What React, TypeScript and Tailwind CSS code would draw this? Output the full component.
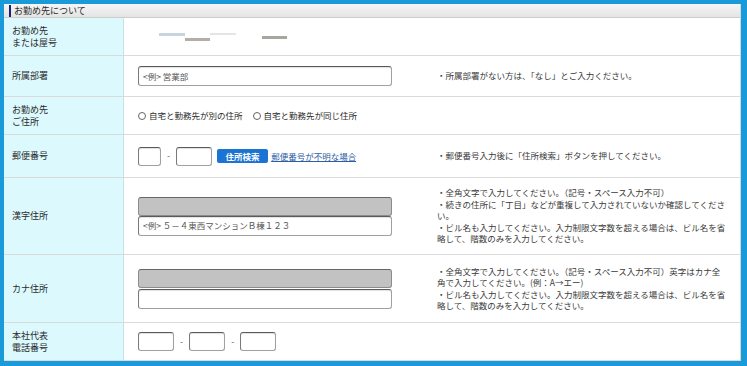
import React from "react";

const font = { fontFamily: '"Noto Sans CJK JP", "Noto Sans", sans-serif' };

function Row({
  label,
  h,
  children,
  note,
}: {
  label: React.ReactNode;
  h: string;
  children?: React.ReactNode;
  note?: React.ReactNode;
}) {
  return (
    <div className={`flex shrink-0 border-b border-[#dadada] ${h}`}>
      <div className="w-[120px] shrink-0 bg-[#dcf9fe] border-r border-[#c6e2e8] flex items-center pl-[8px] text-[9px] leading-[12px] text-[#2a2a2a]">
        <div>{label}</div>
      </div>
      <div className="flex-1 flex items-center pl-[14px]">
        <div className="w-[299px] shrink-0">{children}</div>
        <div className="flex-1 text-[8.5px] leading-[11.5px] text-[#3a3a3a] whitespace-nowrap">{note}</div>
      </div>
    </div>
  );
}

const inputCls =
  "h-[20px] w-[254px] rounded-[3px] border border-[#a0a0a0] border-t-[#5a5a5a] border-l-[#7a7a7a] bg-white shadow-[inset_0_1px_1px_rgba(0,0,0,0.12)] flex items-center pl-[4px] text-[8.5px] text-[#555]";
const grayCls =
  "h-[19px] w-[254px] rounded-[3px] border border-[#8c8c8c] border-t-[#666] bg-[#c2c2c2]";
const smallBox =
  "h-[19px] rounded-[3px] border border-[#a0a0a0] border-t-[#5a5a5a] border-l-[#7a7a7a] bg-white shadow-[inset_0_1px_1px_rgba(0,0,0,0.12)]";

function Radio({ children }: { children: React.ReactNode }) {
  return (
    <span className="inline-flex items-center gap-[3px]">
      <span className="w-[8px] h-[8px] rounded-full border border-[#666] bg-white" />
      <span>{children}</span>
    </span>
  );
}

export default function App() {
  return (
    <div style={font} className="w-[747px] h-[366px] bg-[#1a9ad8] pt-[4px] pl-[4px] pr-[6px] pb-[5px] overflow-hidden">
      <div className="bg-white h-full overflow-hidden flex flex-col border-r border-[#cfd8dc]">
        <div className="h-[14px] shrink-0 bg-gradient-to-b from-[#f6f6f6] to-[#e4e4e4] border-b border-[#cdcdcd] flex items-center pl-[5px]">
          <div className="w-[2px] h-[12px] bg-[#1c1f78]" />
          <div className="ml-[3px] text-[9px] leading-[12px] text-[#2a2a2a]">お勤め先について</div>
        </div>

        <Row label={<>お勤め先<br />または屋号</>} h="h-[38px]">
          <div className="flex items-start h-[8px]">
            <div className="ml-[21px] w-[26px] h-[3px] bg-[#c9d4dd]" />
            <div className="mt-[5px] w-[25px] h-[3px] bg-[#b3aea6]" />
            <div className="w-[26px] h-[2px] bg-[#e3e5e7]" />
            <div className="ml-[26px] mt-[3px] w-[25px] h-[3px] bg-[#a9a59f]" />
          </div>
        </Row>

        <Row label="所属部署" h="h-[41px]" note="・所属部署がない方は、「なし」とご入力ください。">
          <div className={inputCls}>&lt;例&gt; 営業部</div>
        </Row>

        <Row label={<>お勤め先<br />ご住所</>} h="h-[38px]">
          <div className="flex items-center gap-[10px] text-[8.5px] text-[#2a2a2a] whitespace-nowrap">
            <Radio>自宅と勤務先が別の住所</Radio>
            <Radio>自宅と勤務先が同じ住所</Radio>
          </div>
        </Row>

        <Row label="郵便番号" h="h-[43px]" note="・郵便番号入力後に「住所検索」ボタンを押してください。">
          <div className="flex items-center whitespace-nowrap">
            <div className={`${smallBox} w-[23px]`} />
            <span className="mx-[6px] text-[9px] text-[#666]">-</span>
            <div className={`${smallBox} w-[36px]`} />
            <div className="ml-[5px] h-[14px] w-[51px] justify-center rounded-[2px] bg-[#1b74d3] text-white text-[8.5px] font-bold flex items-center">住所検索</div>
            <span className="ml-[3px] text-[8.5px] text-[#2c5ea6] underline">郵便番号が不明な場合</span>
          </div>
        </Row>

        <Row
          label="漢字住所"
          h="h-[77px]"
          note={
            <>
              ・全角文字で入力してください。（記号・スペース入力不可）<br />
              ・続きの住所に「丁目」などが重複して入力されていないか確認してくださ<br />
              い。<br />
              ・ビル名も入力してください。入力制限文字数を超える場合は、ビル名を省<br />
              略して、階数のみを入力してください。
            </>
          }
        >
          <div className="flex flex-col">
            <div className={grayCls} />
            <div className={inputCls}>&lt;例&gt; ５－４東西マンションＢ棟１２３</div>
          </div>
        </Row>

        <Row
          label="カナ住所"
          h="h-[68px]"
          note={
            <>
              ・全角文字で入力してください。（記号・スペース入力不可）英字はカナ全<br />
              角で入力してください。(例：A→エー)<br />
              ・ビル名も入力してください。入力制限文字数を超える場合は、ビル名を省<br />
              略して、階数のみを入力してください。
            </>
          }
        >
          <div className="flex flex-col gap-[1px]">
            <div className={grayCls} />
            <div className={inputCls} />
          </div>
        </Row>

        <Row label={<>本社代表<br />電話番号</>} h="h-[38px]">
          <div className="flex items-center">
            <div className={`${smallBox} w-[36px]`} />
            <span className="mx-[6px] text-[9px] text-[#666]">-</span>
            <div className={`${smallBox} w-[36px]`} />
            <span className="mx-[6px] text-[9px] text-[#666]">-</span>
            <div className={`${smallBox} w-[36px]`} />
          </div>
        </Row>
      </div>
    </div>
  );
}
